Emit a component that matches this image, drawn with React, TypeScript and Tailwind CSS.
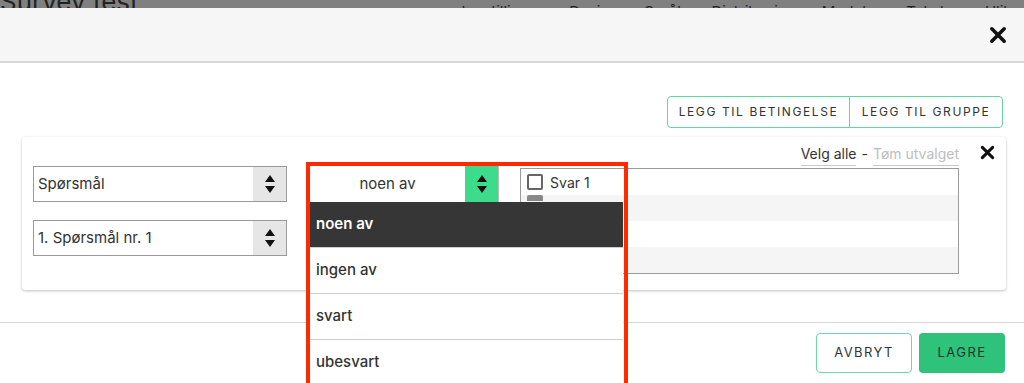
import React from "react";

const font = { fontFamily: "Inter, 'Noto Sans', sans-serif" };

function Arrows({ className = "" }: { className?: string }) {
  return (
    <svg width="12" height="20" viewBox="0 0 12 20" className={className}>
      <polygon points="6,1 11,8 1,8" fill="#111" />
      <polygon points="1,12 11,12 6,19" fill="#111" />
    </svg>
  );
}

function BoldX({ size = 16 }: { size?: number }) {
  return (
    <svg width={size} height={size} viewBox="0 0 16 16">
      <path d="M2.5 2.5 L13.5 13.5 M13.5 2.5 L2.5 13.5" stroke="#111" strokeWidth="3.2" strokeLinecap="round" />
    </svg>
  );
}

function Select({ label }: { label: string }) {
  return (
    <div className="flex h-[36px] w-[254px] border border-[#9a9a9a] bg-white">
      <div className="flex flex-1 items-center pl-[4px] text-[15px] text-[#333]">{label}</div>
      <div className="flex w-[33px] items-center justify-center bg-[#e6e6e6]">
        <Arrows />
      </div>
    </div>
  );
}

export default function App() {
  const options = ["noen av", "ingen av", "svart", "ubesvart"];
  return (
    <div className="relative h-[383px] w-[1024px] overflow-hidden bg-white" style={font}>
      {/* dimmed page behind the modal */}
      <div className="flex h-[8px] items-start overflow-hidden bg-[#808080]">
        <div className="mt-[-13px] text-[26px] leading-[30px] text-[#222]">Survey test</div>
        <div className="ml-auto mr-[4px] mt-[2px] flex gap-[26px] text-[15px] leading-[20px] text-[#222]">
          <span>Innstillinger</span>
          <span>Design</span>
          <span>Språk</span>
          <span>Distribusjon</span>
          <span>Moduler</span>
          <span>Tekster</span>
          <span>Ulike</span>
        </div>
      </div>

      {/* modal header */}
      <div className="flex h-[55px] items-center justify-end border-b-2 border-[#d8d8d8] bg-[#f6f6f6] pr-[17px]">
        <BoldX size={18} />
      </div>

      {/* body */}
      <div className="px-[18px] pt-[33px]">
        <div className="flex justify-end pr-[3px]">
          <div className="flex h-[32px] rounded-[4px] border border-[#62d6a0] text-[12px] tracking-[1.6px] text-[#333]">
            <div className="flex w-[182px] items-center justify-center border-r border-[#62d6a0]">LEGG TIL BETINGELSE</div>
            <div className="flex w-[152px] items-center justify-center">LEGG TIL GRUPPE</div>
          </div>
        </div>

        <div className="relative ml-[4px] mt-[9px] flex h-[153px] w-[984px] rounded-[4px] bg-white px-[11px] shadow-[0_1px_3px_rgba(0,0,0,0.25)]">
          <div className="mt-[29px] flex w-[254px] flex-col gap-[18px]">
            <Select label="Spørsmål" />
            <Select label="1. Spørsmål nr. 1" />
          </div>

          <div className="relative ml-[23px] mt-[29px] w-[190px]">
            <div className="flex h-[36px] bg-white">
              <div className="flex flex-1 items-center justify-center text-[15px] text-[#333]">noen av</div>
              <div className="flex w-[34px] items-center justify-center border-r border-[#bdbdbd] bg-[#3ddc8c]">
                <Arrows />
              </div>
            </div>
            {/* open dropdown menu */}
            <div className="absolute left-0 top-[36px] z-10 w-[313px] bg-white">
              {options.map((o, i) => (
                <div
                  key={o}
                  className={
                    i === 0
                      ? "flex h-[46px] items-center border-b border-[#cfcfcf] bg-[#363636] pl-[6px] text-[15px] font-semibold text-white"
                      : "flex h-[46px] items-center border-b border-[#cfcfcf] bg-white pl-[6px] text-[15px] font-medium text-[#333]"
                  }
                >
                  {o}
                </div>
              ))}
            </div>
            {/* red annotation frame */}
            <div className="pointer-events-none absolute left-[-4px] top-[-4px] z-20 h-[240px] w-[322px] border-4 border-[#ff2a00]" />
          </div>

          <div className="ml-[21px] mt-[8px] w-[441px]">
            <div className="flex h-[23px] items-start justify-end gap-[5px] text-[14px]">
              <span className="border-b border-[#c8c8c8] pb-[2px] leading-[18px] text-[#333]">Velg alle</span>
              <span className="leading-[18px] text-[#333]">-</span>
              <span className="border-b border-[#c8c8c8] pb-[2px] leading-[18px] text-[#bdbdbd]">Tøm utvalget</span>
            </div>
            <div className="h-[106px] border border-[#9a9a9a]">
              <div className="flex h-[26px] items-center gap-[7px] bg-white pl-[6px] text-[14px] text-[#333]">
                <div className="h-[16px] w-[16px] rounded-[2px] border-2 border-[#666]" />
                <span>Svar 1</span>
              </div>
              <div className="flex h-[26px] items-start bg-[#f5f5f5] pl-[6px]">
                <div className="h-[6px] w-[16px] rounded-t-[2px] bg-[#888]" />
              </div>
              <div className="h-[26px] bg-white" />
              <div className="h-[26px] bg-[#f5f5f5]" />
            </div>
          </div>

          <div className="ml-[21px] mt-[8px]">
            <BoldX size={15} />
          </div>
        </div>
      </div>

      {/* footer */}
      <div className="mt-[32px] flex justify-end gap-[7px] border-t border-[#d8d8d8] pr-[19px] pt-[10px]">
        <div className="flex h-[40px] w-[96px] items-center justify-center rounded-[4px] border border-[#6fd8a6] text-[13px] tracking-[1.4px] text-[#333]">
          AVBRYT
        </div>
        <div className="flex h-[40px] w-[86px] items-center justify-center rounded-[4px] bg-[#2ec27a] text-[13px] tracking-[1.4px] text-[#1d3326]">
          LAGRE
        </div>
      </div>
    </div>
  );
}
